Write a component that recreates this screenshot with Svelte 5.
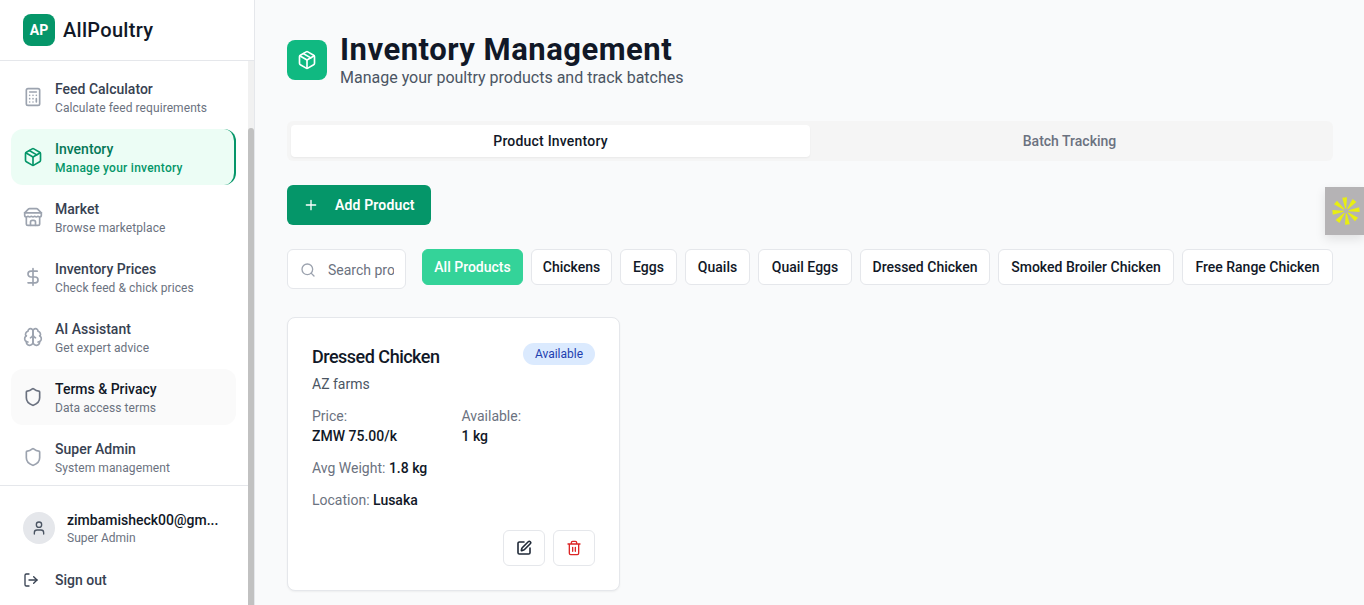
<script lang="ts">
  const filters = [
    "All Products",
    "Chickens",
    "Eggs",
    "Quails",
    "Quail Eggs",
    "Dressed Chicken",
    "Smoked Broiler Chicken",
    "Free Range Chicken",
  ];

  const nav = [
    { key: "calc", title: "Feed Calculator", sub: "Calculate feed requirements" },
    { key: "box", title: "Inventory", sub: "Manage your inventory", active: true },
    { key: "store", title: "Market", sub: "Browse marketplace" },
    { key: "dollar", title: "Inventory Prices", sub: "Check feed & chick prices" },
    { key: "brain", title: "AI Assistant", sub: "Get expert advice" },
    { key: "shield", title: "Terms & Privacy", sub: "Data access terms", hover: true },
    { key: "shield", title: "Super Admin", sub: "System management" },
  ];

  const spokes = [0, 45, 90, 135, 180, 225, 270, 315];
</script>

{#snippet box()}
  <path d="M21 8a2 2 0 0 0-1-1.73l-7-4a2 2 0 0 0-2 0l-7 4A2 2 0 0 0 3 8v8a2 2 0 0 0 1 1.73l7 4a2 2 0 0 0 2 0l7-4A2 2 0 0 0 21 16Z" />
  <path d="m3.3 7 8.7 5 8.7-5" />
  <path d="M12 22V12" />
  <path d="m7.5 4.27 9 5.15" />
{/snippet}

{#snippet navIcon(key: string)}
  {#if key === "calc"}
    <rect x="4" y="2" width="16" height="20" rx="2" />
    <path d="M8 6h8M16 14v4M16 10h.01M12 10h.01M8 10h.01M12 14h.01M8 14h.01M12 18h.01M8 18h.01" />
  {:else if key === "box"}
    {@render box()}
  {:else if key === "store"}
    <path d="m2 7 4.41-4.41A2 2 0 0 1 7.83 2h8.34a2 2 0 0 1 1.42.59L22 7" />
    <path d="M4 12v8a2 2 0 0 0 2 2h12a2 2 0 0 0 2-2v-8" />
    <path d="M15 22v-4a2 2 0 0 0-2-2h-2a2 2 0 0 0-2 2v4" />
    <path d="M2 7h20" />
    <path d="M22 7v3a2 2 0 0 1-2 2a2.7 2.7 0 0 1-1.59-.63.7.7 0 0 0-.82 0A2.7 2.7 0 0 1 16 12a2.7 2.7 0 0 1-1.59-.63.7.7 0 0 0-.82 0A2.7 2.7 0 0 1 12 12a2.7 2.7 0 0 1-1.59-.63.7.7 0 0 0-.82 0A2.7 2.7 0 0 1 8 12a2.7 2.7 0 0 1-1.59-.63.7.7 0 0 0-.82 0A2.7 2.7 0 0 1 4 12a2 2 0 0 1-2-2V7" />
  {:else if key === "dollar"}
    <path d="M12 2v20" />
    <path d="M17 5H9.5a3.5 3.5 0 0 0 0 7h5a3.5 3.5 0 0 1 0 7H6" />
  {:else if key === "brain"}
    <path d="M12 5a3 3 0 1 0-5.997.125 4 4 0 0 0-2.526 5.77 4 4 0 0 0 .556 6.588A4 4 0 1 0 12 18Z" />
    <path d="M12 5a3 3 0 1 1 5.997.125 4 4 0 0 1 2.526 5.77 4 4 0 0 1-.556 6.588A4 4 0 1 1 12 18Z" />
    <path d="M15 13a4.5 4.5 0 0 1-3-4 4.5 4.5 0 0 1-3 4" />
    <path d="M3.477 10.896a4 4 0 0 1 .585-.396M19.938 10.5a4 4 0 0 1 .585.396M6 18a4 4 0 0 1-1.967-.516M19.967 17.484A4 4 0 0 1 18 18" />
  {:else}
    <path d="M20 13c0 5-3.5 7.5-7.66 8.95a1 1 0 0 1-.67-.01C7.5 20.5 4 18 4 13V6a1 1 0 0 1 1-1c2 0 4.5-1.2 6.24-2.72a1.17 1.17 0 0 1 1.52 0C14.51 3.81 17 5 19 5a1 1 0 0 1 1 1z" />
  {/if}
{/snippet}

<div class="shell">
  <aside class="sidebar">
    <div class="brand">
      <span class="logo">AP</span>
      <span class="brand-name">AllPoultry</span>
    </div>
    <div class="sidebar-body">
      <div class="sidebar-col">
        <nav class="nav">
          {#each nav as item}
            <div class="nav-item" class:active={item.active} class:hover={item.hover}>
              <svg class="nav-icon" viewBox="0 0 24 24">{@render navIcon(item.key)}</svg>
              <div class="nav-text">
                <div class="nav-title">{item.title}</div>
                <div class="nav-sub">{item.sub}</div>
              </div>
            </div>
          {/each}
        </nav>
        <div class="foot">
          <div class="user">
            <span class="avatar">
              <svg viewBox="0 0 24 24"><path d="M19 21v-2a4 4 0 0 0-4-4H9a4 4 0 0 0-4 4v2" /><circle cx="12" cy="7" r="4" /></svg>
            </span>
            <div class="user-text">
              <div class="user-mail">zimbamisheck00@gm...</div>
              <div class="user-role">Super Admin</div>
            </div>
          </div>
          <div class="signout">
            <svg viewBox="0 0 24 24"><path d="M9 21H5a2 2 0 0 1-2-2V5a2 2 0 0 1 2-2h4" /><path d="m16 17 5-5-5-5" /><path d="M21 12H9" /></svg>
            <span>Sign out</span>
          </div>
        </div>
      </div>
      <div class="scrollbar"><div class="thumb"></div></div>
    </div>
  </aside>

  <main class="main">
    <header class="head">
      <span class="head-icon"><svg viewBox="0 0 24 24">{@render box()}</svg></span>
      <div>
        <h1>Inventory Management</h1>
        <p>Manage your poultry products and track batches</p>
      </div>
    </header>

    <div class="tabs">
      <button class="tab on" type="button">Product Inventory</button>
      <button class="tab" type="button">Batch Tracking</button>
    </div>

    <button class="add" type="button">
      <svg viewBox="0 0 24 24"><path d="M5 12h14M12 5v14" /></svg>
      Add Product
    </button>

    <div class="filters">
      <label class="search">
        <svg viewBox="0 0 24 24"><circle cx="11" cy="11" r="8" /><path d="m21 21-4.3-4.3" /></svg>
        <input placeholder="Search products..." />
      </label>
      <div class="pills">
        {#each filters as f, i}
          <button class="pill" class:sel={i === 0} type="button">{f}</button>
        {/each}
      </div>
    </div>

    <article class="card">
      <div class="card-top">
        <h3>Dressed Chicken</h3>
        <span class="badge">Available</span>
      </div>
      <div class="seller">AZ farms</div>
      <div class="stats">
        <div><span class="lbl">Price:</span><b>ZMW 75.00/k</b></div>
        <div><span class="lbl">Available:</span><b>1 kg</b></div>
      </div>
      <div class="line"><span class="lbl">Avg Weight:</span> <b>1.8 kg</b></div>
      <div class="line"><span class="lbl">Location:</span> <b>Lusaka</b></div>
      <div class="actions">
        <button class="act edit" type="button" aria-label="Edit">
          <svg viewBox="0 0 24 24"><path d="M12 3H5a2 2 0 0 0-2 2v14a2 2 0 0 0 2 2h14a2 2 0 0 0 2-2v-7" /><path d="M18.375 2.625a1 1 0 0 1 3 3l-9.013 9.014a2 2 0 0 1-.853.505l-2.873.84a.5.5 0 0 1-.62-.62l.84-2.873a2 2 0 0 1 .506-.852z" /></svg>
        </button>
        <button class="act del" type="button" aria-label="Delete">
          <svg viewBox="0 0 24 24"><path d="M3 6h18M19 6v14c0 1-1 2-2 2H7c-1 0-2-1-2-2V6M8 6V4c0-1 1-2 2-2h4c1 0 2 1 2 2v2M10 11v6M14 11v6" /></svg>
        </button>
      </div>
    </article>
  </main>

  <div class="widget">
    <svg viewBox="-14 -14 28 28">
      {#each spokes as deg}
        <polygon points="-0.5,-2.5 0.5,-2.5 2.4,-13.5 -2.4,-13.5" transform="rotate({deg - 6})" />
      {/each}
    </svg>
  </div>
</div>

<style>
  :global(body) {
    margin: 0;
    font-family: Roboto, sans-serif;
    background: #f9fafb;
  }

  svg {
    fill: none;
    stroke: currentColor;
    stroke-width: 2;
    stroke-linecap: round;
    stroke-linejoin: round;
  }

  .shell {
    display: flex;
    height: 605px;
    overflow: hidden;
    position: relative;
  }

  .sidebar {
    width: 255px;
    flex: none;
    display: flex;
    flex-direction: column;
    background: #fff;
    box-sizing: border-box;
    border-right: 1px solid #e5e7eb;
  }

  .sidebar-body {
    flex: 1;
    min-height: 0;
    display: flex;
  }

  .sidebar-col {
    width: 248px;
    flex: none;
    display: flex;
    flex-direction: column;
  }

  .scrollbar {
    width: 6px;
    display: flex;
    flex-direction: column;
    justify-content: flex-end;
    background: #f1f1f1;
  }

  .thumb {
    height: 477px;
    background: #c1c1c1;
    border-radius: 3px 3px 0 0;
  }

  .brand {
    height: 61px;
    box-sizing: border-box;
    flex: none;
    display: flex;
    align-items: center;
    gap: 8px;
    padding-left: 23px;
    border-bottom: 1px solid #e5e7eb;
  }

  .logo {
    width: 32px;
    height: 32px;
    border-radius: 8px;
    background: #059669;
    color: #fff;
    font-weight: 700;
    font-size: 14px;
    display: flex;
    align-items: center;
    justify-content: center;
  }

  .brand-name {
    font-size: 20px;
    font-weight: 500;
    letter-spacing: 0.3px;
    color: #111827;
  }

  .nav {
    flex: 1;
    padding: 8px 11px 0;
    display: flex;
    flex-direction: column;
    gap: 4px;
    overflow: hidden;
  }

  .nav-item {
    height: 56px;
    flex: none;
    width: 225px;
    box-sizing: border-box;
    display: flex;
    align-items: center;
    gap: 12px;
    padding-left: 12px;
    border-radius: 12px;
    color: #9ca3af;
  }

  .nav-item.active {
    background: #ecfdf5;
    color: #059669;
    border-right: 2px solid #059669;
  }

  .nav-item.hover {
    background: #fafafa;
    color: #6b7280;
  }

  .nav-icon {
    width: 20px;
    height: 20px;
    flex: none;
  }

  .nav-title {
    font-size: 14px;
    font-weight: 500;
    line-height: 20px;
    color: #374151;
  }

  .nav-sub {
    font-size: 12px;
    line-height: 16px;
    margin-top: 1px;
    letter-spacing: 0.08px;
    color: #6b7280;
  }

  .active .nav-title {
    color: #047857;
  }

  .active .nav-sub {
    color: #059669;
    font-weight: 500;
    letter-spacing: 0.25px;
  }

  .hover .nav-title {
    color: #111827;
  }

  .foot {
    flex: none;
    height: 120px;
    box-sizing: border-box;
    border-top: 1px solid #e5e7eb;
    padding: 24px 23px 0;
  }

  .user {
    display: flex;
    align-items: center;
    gap: 12px;
  }

  .avatar {
    width: 32px;
    height: 32px;
    border-radius: 50%;
    background: #e5e7eb;
    color: #4b5563;
    display: flex;
    align-items: center;
    justify-content: center;
    flex: none;
  }

  .avatar svg {
    width: 16px;
    height: 16px;
  }

  .user-mail {
    font-size: 14px;
    font-weight: 500;
    line-height: 20px;
    color: #111827;
  }

  .user-role {
    font-size: 12px;
    line-height: 16px;
    color: #6b7280;
  }

  .signout {
    display: flex;
    align-items: center;
    gap: 16px;
    margin-top: 26px;
    font-size: 14px;
    font-weight: 500;
    color: #374151;
  }

  .signout svg {
    width: 16px;
    height: 16px;
  }

  .main {
    flex: 1;
    min-width: 0;
    padding: 32px 31px 0 32px;
    box-sizing: border-box;
    color: #111827;
  }

  .head {
    display: flex;
    align-items: center;
    gap: 13px;
    height: 56px;
    margin-bottom: 33px;
  }

  .head-icon {
    width: 40px;
    height: 40px;
    border-radius: 8px;
    background: #10b981;
    color: #fff;
    display: flex;
    align-items: center;
    justify-content: center;
    flex: none;
  }

  .head-icon svg {
    width: 20px;
    height: 20px;
  }

  h1 {
    margin: 0;
    font-size: 31px;
    line-height: 36px;
    font-weight: 700;
    letter-spacing: 0.5px;
    color: #111827;
  }

  .head p {
    margin: 0;
    font-size: 16px;
    line-height: 20px;
    color: #4b5563;
  }

  .tabs {
    display: grid;
    grid-template-columns: 1fr 1fr;
    height: 40px;
    box-sizing: border-box;
    padding: 4px;
    background: #f5f5f5;
    border-radius: 6px;
    margin-bottom: 24px;
  }

  .tab {
    border: none;
    background: none;
    font: 500 14px Roboto, sans-serif;
    color: #6b7280;
    border-radius: 4px;
  }

  .tab.on {
    background: #fff;
    color: #111827;
    letter-spacing: 0.2px;
    box-shadow: 0 1px 2px rgba(0, 0, 0, 0.05);
  }

  .add {
    display: flex;
    align-items: center;
    gap: 16px;
    width: 144px;
    height: 40px;
    padding: 0 0 0 16px;
    border: none;
    border-radius: 6px;
    background: #059669;
    color: #fff;
    font: 600 14px Roboto, sans-serif;
    letter-spacing: 0.15px;
    margin-bottom: 24px;
  }

  .add svg {
    width: 16px;
    height: 16px;
  }

  .filters {
    display: flex;
    gap: 16px;
    margin-bottom: 28px;
  }

  .search {
    width: 119px;
    height: 40px;
    flex: none;
    box-sizing: border-box;
    display: flex;
    align-items: center;
    gap: 12px;
    padding: 1px 0 0 12px;
    background: #fff;
    border: 1px solid #e5e7eb;
    border-radius: 6px;
    color: #9ca3af;
    overflow: hidden;
  }

  .search svg {
    width: 16px;
    height: 16px;
    flex: none;
  }

  .search input {
    width: 66px;
    padding: 0;
    border: none;
    outline: none;
    background: none;
    font: 400 14px Roboto, sans-serif;
  }

  .search input::placeholder {
    color: #6b7280;
  }

  .pills {
    display: grid;
    grid-template-columns: 101px 81px 57px 65px 94px 130px 176px 151px;
    gap: 8px;
    align-self: flex-start;
  }

  .pill {
    height: 36px;
    padding: 0;
    white-space: nowrap;
    background: #fff;
    border: 1px solid #e5e7eb;
    border-radius: 6px;
    color: #111827;
    font: 500 14px Roboto, sans-serif;
  }

  .pill.sel {
    background: #34d399;
    border-color: #34d399;
    color: #fff;
  }

  .card {
    width: 333px;
    height: 274px;
    box-sizing: border-box;
    background: #fff;
    border: 1px solid #e5e7eb;
    border-radius: 8px;
    box-shadow: 0 1px 2px rgba(0, 0, 0, 0.05);
    padding: 24px;
    font-size: 14px;
    color: #111827;
  }

  .card-top {
    display: flex;
    justify-content: space-between;
    align-items: flex-start;
  }

  h3 {
    margin: 1px 0 -1px;
    font-size: 18px;
    line-height: 28px;
    font-weight: 500;
    letter-spacing: -0.5px;
    color: #111827;
  }

  .badge {
    width: 72px;
    height: 22px;
    margin-top: 1px;
    text-align: center;
    border-radius: 11px;
    background: #dbeafe;
    color: #1e40af;
    font-size: 12px;
    line-height: 22px;
  }

  .seller {
    margin-top: 4px;
    line-height: 20px;
    color: #4b5563;
  }

  .stats {
    display: grid;
    grid-template-columns: 1fr 1fr;
    column-gap: 16px;
    margin-top: 12px;
    line-height: 20px;
  }

  .stats .lbl,
  .stats b {
    display: block;
  }

  .lbl {
    color: #6b7280;
  }

  b {
    font-weight: 500;
    color: #111827;
  }

  .line {
    margin-top: 12px;
    line-height: 20px;
  }

  .actions {
    display: flex;
    justify-content: flex-end;
    gap: 8px;
    margin-top: 20px;
  }

  .act {
    width: 42px;
    height: 36px;
    padding: 0;
    display: flex;
    align-items: center;
    justify-content: center;
    background: #fff;
    border: 1px solid #e5e7eb;
    border-radius: 6px;
  }

  .act svg {
    width: 16px;
    height: 16px;
  }

  .act.edit {
    color: #1f2937;
  }

  .act.edit svg {
    stroke-width: 2.4;
  }

  .act.del {
    color: #dc2626;
  }

  .widget {
    position: absolute;
    right: 0;
    top: 187px;
    width: 39px;
    height: 48px;
    background: #b5b3b5;
    box-shadow: 0 4px 10px rgba(0, 0, 0, 0.1);
    display: flex;
    align-items: center;
    justify-content: center;
  }

  .widget svg {
    width: 28px;
    height: 28px;
    margin-left: 3px;
    fill: #e8ee12;
    stroke: none;
  }
</style>
